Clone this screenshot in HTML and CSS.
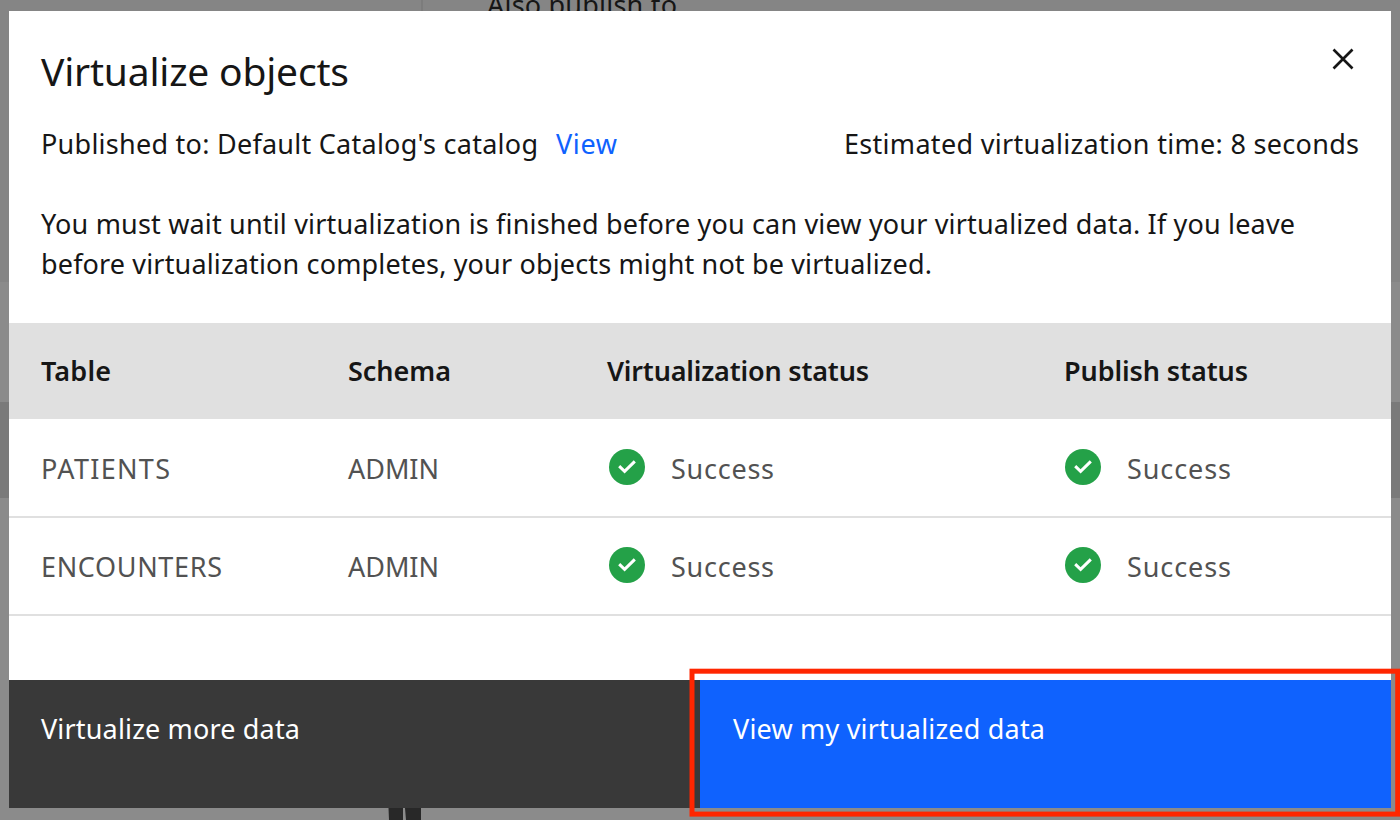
FILE: index.html
```html
<!DOCTYPE html>
<html lang="en">
<head>
<meta charset="utf-8">
<title>Virtualize objects</title>
<link rel="stylesheet" href="styles.css">
</head>
<body>
<div class="backdrop">
  <div class="edge-panel top"></div>
  <div class="edge-panel selected"></div>
  <div class="divider"></div>
  <span class="backdrop-label fit" data-w="190">Also publish to</span>
  <svg class="backdrop-mark" width="33" height="12" viewBox="0 0 33 12"><path d="M.5 0H15V12H1Z M17 0H33V12H18Z"/></svg>
</div>
<main class="modal">
  <header class="header">
    <h1><span class="fit" data-w="308">Virtualize objects</span></h1>
    <button class="close" aria-label="Close"><svg width="20" height="20" viewBox="0 0 20 20"><path d="M1 1L19 19M19 1L1 19"/></svg></button>
  </header>
  <div class="summary">
    <p><span class="fit" data-w="497">Published to: Default Catalog's catalog</span><a class="fit" data-w="61">View</a></p>
    <p><span class="fit" data-w="515">Estimated virtualization time: 8 seconds</span></p>
  </div>
  <p class="notice"><span class="fit" data-w="1254">You must wait until virtualization is finished before you can view your virtualized data. If you leave</span><br><span class="fit" data-w="891">before virtualization completes, your objects might not be virtualized.</span></p>
  <section class="table">
    <div class="row head"><span><b class="fit" data-w="70">Table</b></span><span><b class="fit" data-w="103">Schema</b></span><span><b class="fit" data-w="262">Virtualization status</b></span><span><b class="fit" data-w="184">Publish status</b></span></div>
    <div class="row"><span><i class="fit" data-w="129">PATIENTS</i></span><span><i class="fit" data-w="91">ADMIN</i></span><span class="status"><svg class="tick" viewBox="0 0 36 36"><circle cx="18" cy="18" r="18"/><path d="M10.2 17.2L15.6 22.4L25.8 12.4"/></svg><i class="fit" data-w="103">Success</i></span><span class="status"><svg class="tick" viewBox="0 0 36 36"><circle cx="18" cy="18" r="18"/><path d="M10.2 17.2L15.6 22.4L25.8 12.4"/></svg><i class="fit" data-w="104">Success</i></span></div>
    <div class="row"><span><i class="fit" data-w="181">ENCOUNTERS</i></span><span><i class="fit" data-w="91">ADMIN</i></span><span class="status"><svg class="tick" viewBox="0 0 36 36"><circle cx="18" cy="18" r="18"/><path d="M10.2 17.2L15.6 22.4L25.8 12.4"/></svg><i class="fit" data-w="103">Success</i></span><span class="status"><svg class="tick" viewBox="0 0 36 36"><circle cx="18" cy="18" r="18"/><path d="M10.2 17.2L15.6 22.4L25.8 12.4"/></svg><i class="fit" data-w="104">Success</i></span></div>
  </section>
  <footer class="actions">
    <button class="secondary"><span class="fit" data-w="259">Virtualize more data</span></button>
    <button class="primary"><span class="fit" data-w="312">View my virtualized data</span></button>
  </footer>
</main>
<svg class="highlight" width="712" height="152" viewBox="0 0 712 152"><rect x="4" y="3.2" width="705.7" height="142.9"/></svg>
<script src="fit.js"></script>
</body>
</html>
```
FILE: styles.css
```css
* { box-sizing: border-box; }
body { margin: 0; width: 1400px; height: 820px; overflow: hidden; position: relative; padding: 11px 9px 0; background: #8b8b8b; color: #161616; font: 27px/40px "Noto Sans", "Open Sans", sans-serif; }
h1, p { margin: 0; font-weight: 400; }
button { border: 0; background: none; font: inherit; color: inherit; }
i { font-style: normal; }
b { font-weight: 600; }
.fit { display: inline-block; white-space: nowrap; vertical-align: top; }
.backdrop { position: absolute; inset: 0; }
.edge-panel { position: absolute; left: 0; right: 0; }
.top { top: 0; height: 282px; background: #858585; }
.selected { top: 402px; height: 96px; background: #7a7a7a; }
.divider { position: absolute; left: 421px; top: 0; width: 2px; height: 11px; background: #7c7c7c; }
.backdrop-label { position: absolute; left: 487px; top: -15px; }
.backdrop-mark { position: absolute; left: 388px; top: 808px; fill: #282828; }
.modal { position: relative; width: 1382px; height: 797px; background: #fff; display: flex; flex-direction: column; }
.header { height: 113px; padding: 34px 32px 0; display: flex; justify-content: space-between; }
h1 { font-size: 39px; line-height: 52px; }
.close { width: 32px; height: 32px; padding: 0; margin: -2px 0 0; display: flex; align-items: center; justify-content: center; }
.close svg { fill: none; stroke: #161616; stroke-width: 2.8; stroke-linecap: square; overflow: visible; }
.close path { transform: translate(.5px, .5px) scale(.95); }
.summary { height: 80px; padding: 0 32px; display: flex; justify-content: space-between; }
.summary a { margin-left: 18px; color: #0f62fe; }
.notice { height: 119px; padding: 0 32px; }
.table { height: 357px; }
.row { height: 98px; padding: 1px 32px 0; display: grid; grid-template-columns: 306px 262px 456px 1fr; align-items: center; color: #525252; box-shadow: 0 1px #e0e0e0, inset 0 -1px #e0e0e0; }
.row > span:nth-child(2) { padding-left: 1px; }
.head { height: 96px; padding-top: 0; grid-template-columns: 306px 260px 457px 1fr; background: #e0e0e0; box-shadow: none; color: #161616; }
.status { display: flex; align-items: center; gap: 26px; }
.tick { width: 36px; height: 36px; margin-top: -3px; fill: #24a148; }
.tick path { fill: none; stroke: #fff; stroke-width: 3; }
.actions { height: 128px; display: grid; grid-template-columns: 691px 691px; color: #fff; }
.actions button { padding: 29px 32px; text-align: left; display: flex; align-items: flex-start; }
.actions .primary { padding-left: 33px; }
.secondary { background: #393939; }
.primary { background: #0f62fe; }
.highlight { position: absolute; left: 688px; top: 668px; fill: none; stroke: #ff2600; stroke-width: 5; }
```
FILE: fit.js
```js
document.querySelectorAll('.fit').forEach(function (el) {
  var target = Number(el.dataset.w);
  var gap = (target - el.getBoundingClientRect().width) / (el.textContent.length - 1);
  el.style.letterSpacing = gap + 'px';
  el.style.marginRight = -gap + 'px';
});
```
